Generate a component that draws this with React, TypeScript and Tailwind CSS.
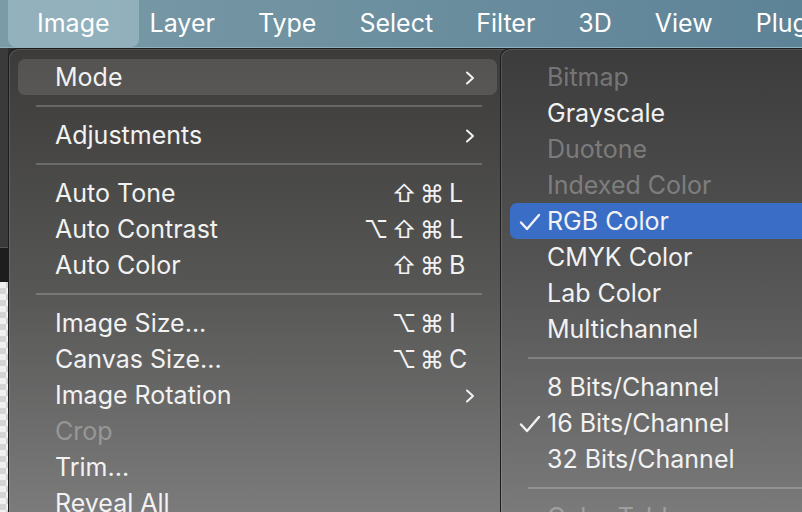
import React from 'react';

const font = { fontFamily: 'Inter, "DejaVu Sans", "Noto Sans", sans-serif' };

type Item =
  | { sep: true }
  | {
      sep?: false;
      label: string;
      disabled?: boolean;
      sub?: boolean;
      mods?: string[];
      keyChar?: string;
      active?: boolean;
      checked?: boolean;
      selected?: boolean;
    };

const mainItems: Item[] = [
  { label: 'Mode', sub: true, active: true },
  { sep: true },
  { label: 'Adjustments', sub: true },
  { sep: true },
  { label: 'Auto Tone', mods: ['⇧', '⌘'], keyChar: 'L' },
  { label: 'Auto Contrast', mods: ['⌥', '⇧', '⌘'], keyChar: 'L' },
  { label: 'Auto Color', mods: ['⇧', '⌘'], keyChar: 'B' },
  { sep: true },
  { label: 'Image Size...', mods: ['⌥', '⌘'], keyChar: 'I' },
  { label: 'Canvas Size...', mods: ['⌥', '⌘'], keyChar: 'C' },
  { label: 'Image Rotation', sub: true },
  { label: 'Crop', disabled: true },
  { label: 'Trim...' },
  { label: 'Reveal All' },
];

const modeItems: Item[] = [
  { label: 'Bitmap', disabled: true },
  { label: 'Grayscale' },
  { label: 'Duotone', disabled: true },
  { label: 'Indexed Color', disabled: true },
  { label: 'RGB Color', checked: true, selected: true },
  { label: 'CMYK Color' },
  { label: 'Lab Color' },
  { label: 'Multichannel' },
  { sep: true },
  { label: '8 Bits/Channel' },
  { label: '16 Bits/Channel', checked: true },
  { label: '32 Bits/Channel' },
  { sep: true },
  { label: 'Color Table...', disabled: true },
];

function Chevron() {
  return (
    <svg width="10" height="14" viewBox="0 0 10 14" fill="none">
      <polyline points="2,1.5 8,7 2,12.5" stroke="#f2f2f2" strokeWidth="2" strokeLinecap="round" strokeLinejoin="round" />
    </svg>
  );
}

function Check() {
  return (
    <svg width="22" height="18" viewBox="0 0 22 18" fill="none">
      <path d="M2 9.5 L8 16 L20 2" stroke="#f2f2f2" strokeWidth="2.4" strokeLinecap="round" strokeLinejoin="round" />
    </svg>
  );
}

function MainMenu() {
  return (
    <div className="w-[498px] shrink-0 pt-[10px] rounded-tl-[10px] border-l border-t border-[#1c1c1c] bg-gradient-to-b from-[#3c3b3a] via-[#555554] to-[#7b7b7b] shadow-[inset_1px_1px_0_rgba(255,255,255,0.12)]">
      {mainItems.map((it, i) =>
        it.sep ? (
          <div key={i} className="h-[22px] flex items-center pl-[27px] pr-[24px]">
            <div className="h-[2px] w-full bg-white/20" />
          </div>
        ) : (
          <div key={i} className="h-[36px] px-[9px]">
            <div
              className={`h-full pt-[2px] flex items-center justify-between pl-[37px] pr-[22px] rounded-[7px] ${
                it.active ? 'bg-white/[0.12]' : ''
              }`}
            >
              <span className={`text-[25px] ${it.disabled ? 'text-white/30' : 'text-[#f2f2f2]'}`}>{it.label}</span>
              {it.sub && <Chevron />}
              {it.mods && (
                <div className="flex items-center text-[24px] text-[#f2f2f2]">
                  {it.mods.map((m, j) => (
                    <span key={j} className="w-[28px] text-center">
                      {m}
                    </span>
                  ))}
                  <span className="w-[29px] pl-[3px] text-left text-[25px]">{it.keyChar}</span>
                </div>
              )}
            </div>
          </div>
        )
      )}
    </div>
  );
}

function ModeMenu() {
  return (
    <div className="relative z-10 -ml-[6px] flex-1 pt-[10px] rounded-tl-[10px] border-l border-t border-[#1c1c1c] bg-gradient-to-b from-[#3c3c3c] via-[#555555] to-[#7a7a7a] shadow-[inset_1px_1px_0_rgba(255,255,255,0.12)]">
      {modeItems.map((it, i) =>
        it.sep ? (
          <div key={i} className="h-[22px] flex items-center pl-[27px]">
            <div className="h-[2px] w-full bg-white/20" />
          </div>
        ) : (
          <div key={i} className="h-[36px] pl-[9px]">
            <div
              className={`h-full pt-[2px] flex items-center rounded-l-[7px] ${it.selected ? 'bg-[#3a6ec6]' : ''}`}
            >
              <span className="w-[37px] flex justify-center pl-[2px]">{it.checked && <Check />}</span>
              <span className={`text-[25px] whitespace-nowrap ${it.disabled ? 'text-white/30' : 'text-[#f2f2f2]'}`}>
                {it.label}
              </span>
            </div>
          </div>
        )
      )}
    </div>
  );
}

export default function App() {
  const bar = ['Layer', 'Type', 'Select', 'Filter', '3D', 'View', 'Plugins'];
  return (
    <div className="w-[802px] h-[512px] overflow-hidden bg-[#2c2c2c] flex flex-col" style={font}>
      {/* Menu bar */}
      <div className="h-[48px] shrink-0 flex items-stretch pl-[8px] bg-gradient-to-r from-[#7b9ba7] via-[#6c8f9f] to-[#5d8397] border-b border-[#8fb0bd]">
        <span className="px-[29px] flex items-center rounded-b-[8px] bg-[#a4c2cb]/60 text-[25px] text-white">Image</span>
        <div className="flex items-center gap-[43px] ml-[11px] text-[25px] text-white whitespace-nowrap">
          {bar.map((b) => (
            <span key={b}>{b}</span>
          ))}
        </div>
      </div>

      {/* Menus over the workspace */}
      <div className="flex-1 flex overflow-hidden">
        <div className="w-[8px] shrink-0 flex flex-col">
          <div className="h-[200px] bg-[#3a3a3a] border-b border-[#555]" />
          <div className="h-[34px] bg-[#1d1d1d]" />
          <div className="flex-1 bg-[repeating-conic-gradient(#d4d4d4_0_25%,#f0f0f0_0_50%)] bg-[length:12px_12px]" />
        </div>
        <MainMenu />
        <ModeMenu />
      </div>
    </div>
  );
}
